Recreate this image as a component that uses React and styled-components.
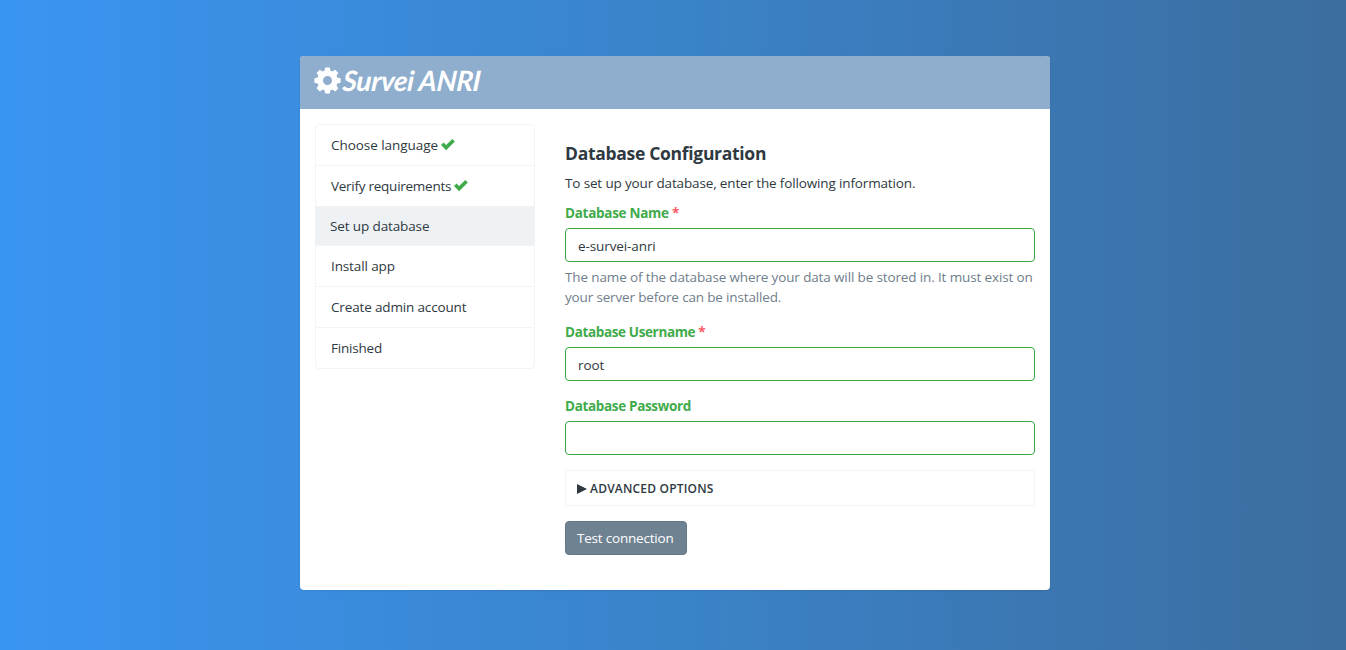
import React from "react";
import styled, { createGlobalStyle } from "styled-components";

const Global = createGlobalStyle`
  * { box-sizing: border-box; }
  html, body { margin: 0; height: 100%; }
  body {
    background: linear-gradient(to right, #3a95f2, #3a83c9 50%, #3c6d9f);
    font: 14px/20px "Open Sans", "Noto Sans", sans-serif;
    color: #2f3941;
    overflow: hidden;
  }
`;
const Page = styled.div`
  min-height: 650px;
  padding: 56px 296px 60px 300px;
`;
const Card = styled.main`
  height: 534px;
  background: #fff;
  border-radius: 4px;
  overflow: hidden;
  box-shadow: 0 1px 2px rgba(0, 0, 0, 0.08);
`;
const Header = styled.header`
  height: 53px;
  padding: 0 14px 5px;
  display: flex;
  align-items: center;
  gap: 2px;
  background: #8faece;
  color: #fff;
`;
const Brand = styled.span`
  font: italic 700 28px/32px Lato, sans-serif;
  letter-spacing: -0.35px;
  white-space: nowrap;
  transform: skewX(-5deg);
`;
const Body = styled.div`
  display: flex;
  gap: 30px;
  padding: 15px;
`;
const Steps = styled.ul`
  width: 220px;
  height: 245px;
  margin: 0;
  padding: 0;
  list-style: none;
  border: 1px solid #f3f4f5;
  border-radius: 4px;
`;
const Step = styled.li`
  height: ${(p) => (p.$active ? 40 : 41)}px;
  margin: ${(p) => (p.$active ? "-1px -1px 0" : "0")};
  padding: ${(p) => (p.$active ? "10px 15px" : "10px 15px")};
  display: flex;
  gap: 4px;
  background: ${(p) => (p.$active ? "#eef2f5" : "transparent")};
  border-bottom: 1px solid #f3f4f5;
  &:last-child { border-bottom: 0; }
`;
const Fit = styled.span`
  font-size: ${(p) => p.$size || 13.5}px;
  letter-spacing: ${(p) => p.$track || 0}px;
  white-space: nowrap;
`;
const Form = styled.form`
  width: 470px;
  padding-top: 19px;
`;
const Title = styled.h1`
  margin: 0 0 9px;
  font-size: 17.5px;
  letter-spacing: -0.3px;
  line-height: 21px;
  font-weight: 700;
`;
const Intro = styled.p`
  margin: 0 0 10px;
`;
const Field = styled.div`
  margin-bottom: 15px;
`;
const Label = styled.label`
  display: block;
  height: 20px;
  margin-bottom: 5px;
  color: #3fab4a;
  font-weight: 700;
`;
const Required = styled.span`
  color: #fb5a66;
`;
const Input = styled.div`
  height: 34px;
  padding: 7px 12px;
  line-height: 20px;
  border: 1px solid #37a746;
  border-radius: 4px;
`;
const Help = styled.div`
  margin-top: 5px;
  color: #6f7e8b;
  display: flex;
  flex-direction: column;
`;
const Advanced = styled.div`
  height: 36px;
  padding: 1px 11px 0;
  display: flex;
  align-items: center;
  gap: 3px;
  border: 1px solid #f3f4f5;
  font-weight: 600;
`;
const Button = styled.button`
  display: block;
  width: 122px;
  height: 34px;
  margin-top: 15px;
  padding: 0 11px;
  text-align: left;
  background: #6f8292;
  border: 1px solid #647888;
  border-radius: 4px;
  color: #fff;
  font-family: inherit;
`;

const GearIcon = styled.svg`
  flex: none;
`;
const CheckIcon = styled.svg`
  flex: none;
  margin: 4px 0 0 -1px;
`;

const Gear = () => (
  <GearIcon width="27" height="27" viewBox="0 0 27 27" fill="currentColor" fillRule="evenodd">
    <path d="M11.2 0.5h4.6l.7 3.3 1.8.8 2.9-1.9 3.2 3.2-1.9 2.9.8 1.8 3.3.7v4.5l-3.3.7-.8 1.8 1.9 2.9-3.2 3.2-2.9-1.9-1.8.8-.7 3.3h-4.6l-.7-3.3-1.8-.8-2.9 1.9-3.2-3.2 1.9-2.9-.8-1.8-3.3-.7v-4.5l3.3-.7.8-1.8-1.9-2.9 3.2-3.2 2.9 1.9 1.8-.8zM13.5 9a4.5 4.5 0 1 0 0 9a4.5 4.5 0 1 0 0-9z" />
  </GearIcon>
);
const Check = () => (
  <CheckIcon width="14" height="12" viewBox="0 0 14 12" fill="#3fab4a">
    <path d="M0 6.1 2.5 3.4 5.1 5.9 11.3 0 13.9 2.6 5.1 11.3z" />
  </CheckIcon>
);

const steps = [
  { text: "Choose language", done: true, track: -0.05 },
  { text: "Verify requirements", done: true, track: -0.26 },
  { text: "Set up database", active: true, track: -0.12 },
  { text: "Install app", track: -0.12 },
  { text: "Create admin account", track: -0.15 },
  { text: "Finished", track: -0.2 },
];

export default function App() {
  return (
    <Page>
      <Global />
      <Card>
        <Header><Gear /><Brand>Survei ANRI</Brand></Header>
        <Body>
          <Steps>
            {steps.map((s) => (
              <Step key={s.text} $active={s.active}>
                <Fit $track={s.track}>{s.text}</Fit>
                {s.done && <Check />}
              </Step>
            ))}
          </Steps>
          <Form>
            <Title>Database Configuration</Title>
            <Intro><Fit $track={-0.145}>To set up your database, enter the following information.</Fit></Intro>
            <Field>
              <Label><Fit $track={-0.28}>Database Name <Required>*</Required></Fit></Label>
              <Input><Fit $track={-0.1}>e-survei-anri</Fit></Input>
              <Help>
                <Fit $track={-0.135}>The name of the database where your data will be stored in. It must exist on</Fit>
                <Fit $track={-0.16}>your server before can be installed.</Fit>
              </Help>
            </Field>
            <Field>
              <Label><Fit $track={-0.36}>Database Username <Required>*</Required></Fit></Label>
              <Input><Fit $track={-0.1}>root</Fit></Input>
            </Field>
            <Field>
              <Label><Fit $track={-0.34}>Database Password</Fit></Label>
              <Input />
            </Field>
            <Advanced>
              <svg width="10" height="10" viewBox="0 0 10 10" fill="currentColor"><path d="M0 0 10 5 0 10z" /></svg>
              <Fit $size={12} $track={0.2}>ADVANCED OPTIONS</Fit>
            </Advanced>
            <Button type="button"><Fit $track={-0.2}>Test connection</Fit></Button>
          </Form>
        </Body>
      </Card>
    </Page>
  );
}
